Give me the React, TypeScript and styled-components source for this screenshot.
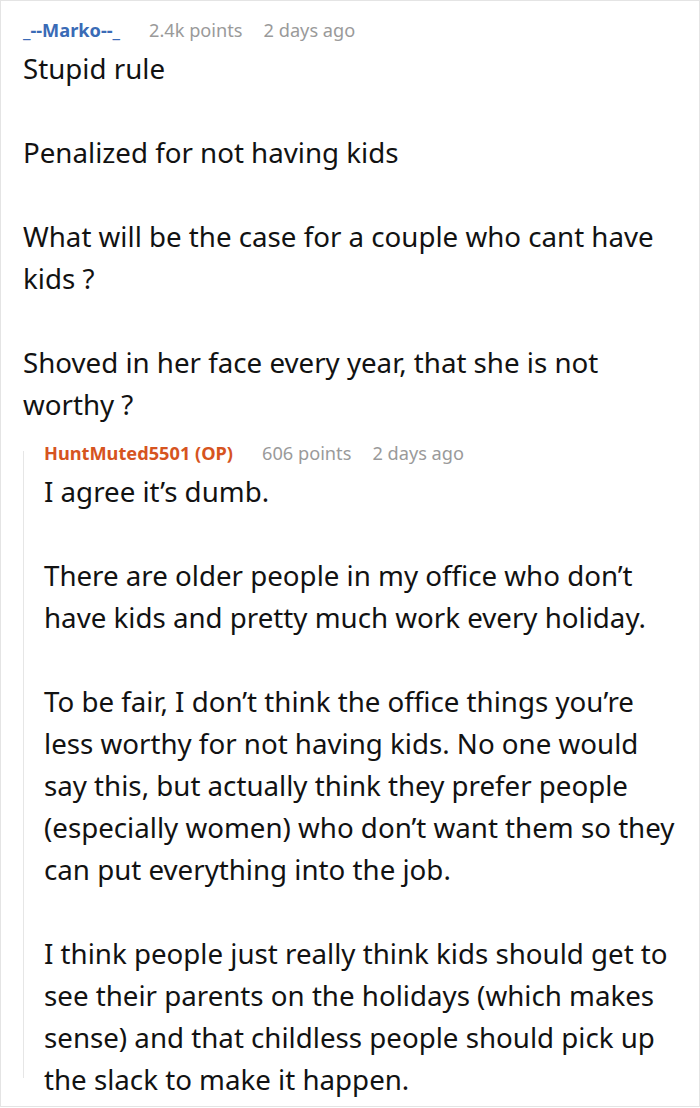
import styled, { createGlobalStyle } from "styled-components";

interface Comment {
    author: string,
    isOp?: boolean,
    points: string,
    time: string,
    paragraphs: string[],
}

const parent: Comment = {
    author: "_--Marko--_",
    points: "2.4k points",
    time: "2 days ago",
    paragraphs: [
        "Stupid rule",
        "Penalized for not having kids",
        "What will be the case for a couple who cant have kids ?",
        "Shoved in her face every year, that she is not worthy ?",
    ],
}

const reply: Comment = {
    author: "HuntMuted5501 (OP)",
    isOp: true,
    points: "606 points",
    time: "2 days ago",
    paragraphs: [
        "I agree it’s dumb.",
        "There are older people in my office who don’t have kids and pretty much work every holiday.",
        "To be fair, I don’t think the office things you’re less worthy for not having kids. No one would say this, but actually think they prefer people (especially women) who don’t want them so they can put everything into the job.",
        "I think people just really think kids should get to see their parents on the holidays (which makes sense) and that childless people should pick up the slack to make it happen.",
    ],
}

const GlobalStyle = createGlobalStyle`
    html, body {
        margin: 0;
        padding: 0;
        background: #ffffff;
    }
    body {
        font-family: "Noto Sans", "Open Sans", sans-serif;
    }
`

const CommentBody = (props: { comment: Comment }) => (
    <>
        <Header>
            <Author $op={props.comment.isOp}>{props.comment.author}</Author>
            <Meta>{props.comment.points}</Meta>
            <Meta>{props.comment.time}</Meta>
        </Header>
        {props.comment.paragraphs.map((text, i) => (
            <Paragraph key={i}>{text}</Paragraph>
        ))}
    </>
)

const App = () => {
    return (
        <>
            <GlobalStyle/>
            <Frame>
                <CommentBody comment={parent}/>
                <Reply>
                    <CommentBody comment={reply}/>
                </Reply>
            </Frame>
        </>
    )
}

const Frame = styled.div`
    box-sizing: border-box;
    width: 700px;
    height: 1107px;
    padding: 12px 22px 0 22px;
    border: 1px solid #e4e4e4;
    overflow: hidden;
`

const Header = styled.div`
    display: flex;
    align-items: center;
    height: 34px;
    font-size: 18.2px;
    white-space: nowrap;
`

const Author = styled.span<{ $op?: boolean }>`
    font-weight: 700;
    color: ${(props) => props.$op ? "#d6541f" : "#3a6bb6"};
    margin-right: 29px;
`

const Meta = styled.span`
    color: #9a9a9a;
    margin-right: 21px;
`

const Paragraph = styled.p`
    margin: 0;
    font-size: 27.7px;
    line-height: 42px;
    color: #121212;

    & + & {
        margin-top: 42px;
    }
`

const Reply = styled.div`
    position: relative;
    margin-top: 11px;
    padding-left: 21px;

    &::before {
        content: "";
        position: absolute;
        left: 0;
        top: 15px;
        bottom: 22px;
        width: 1px;
        background: #e6e6e6;
    }
`

export default App
